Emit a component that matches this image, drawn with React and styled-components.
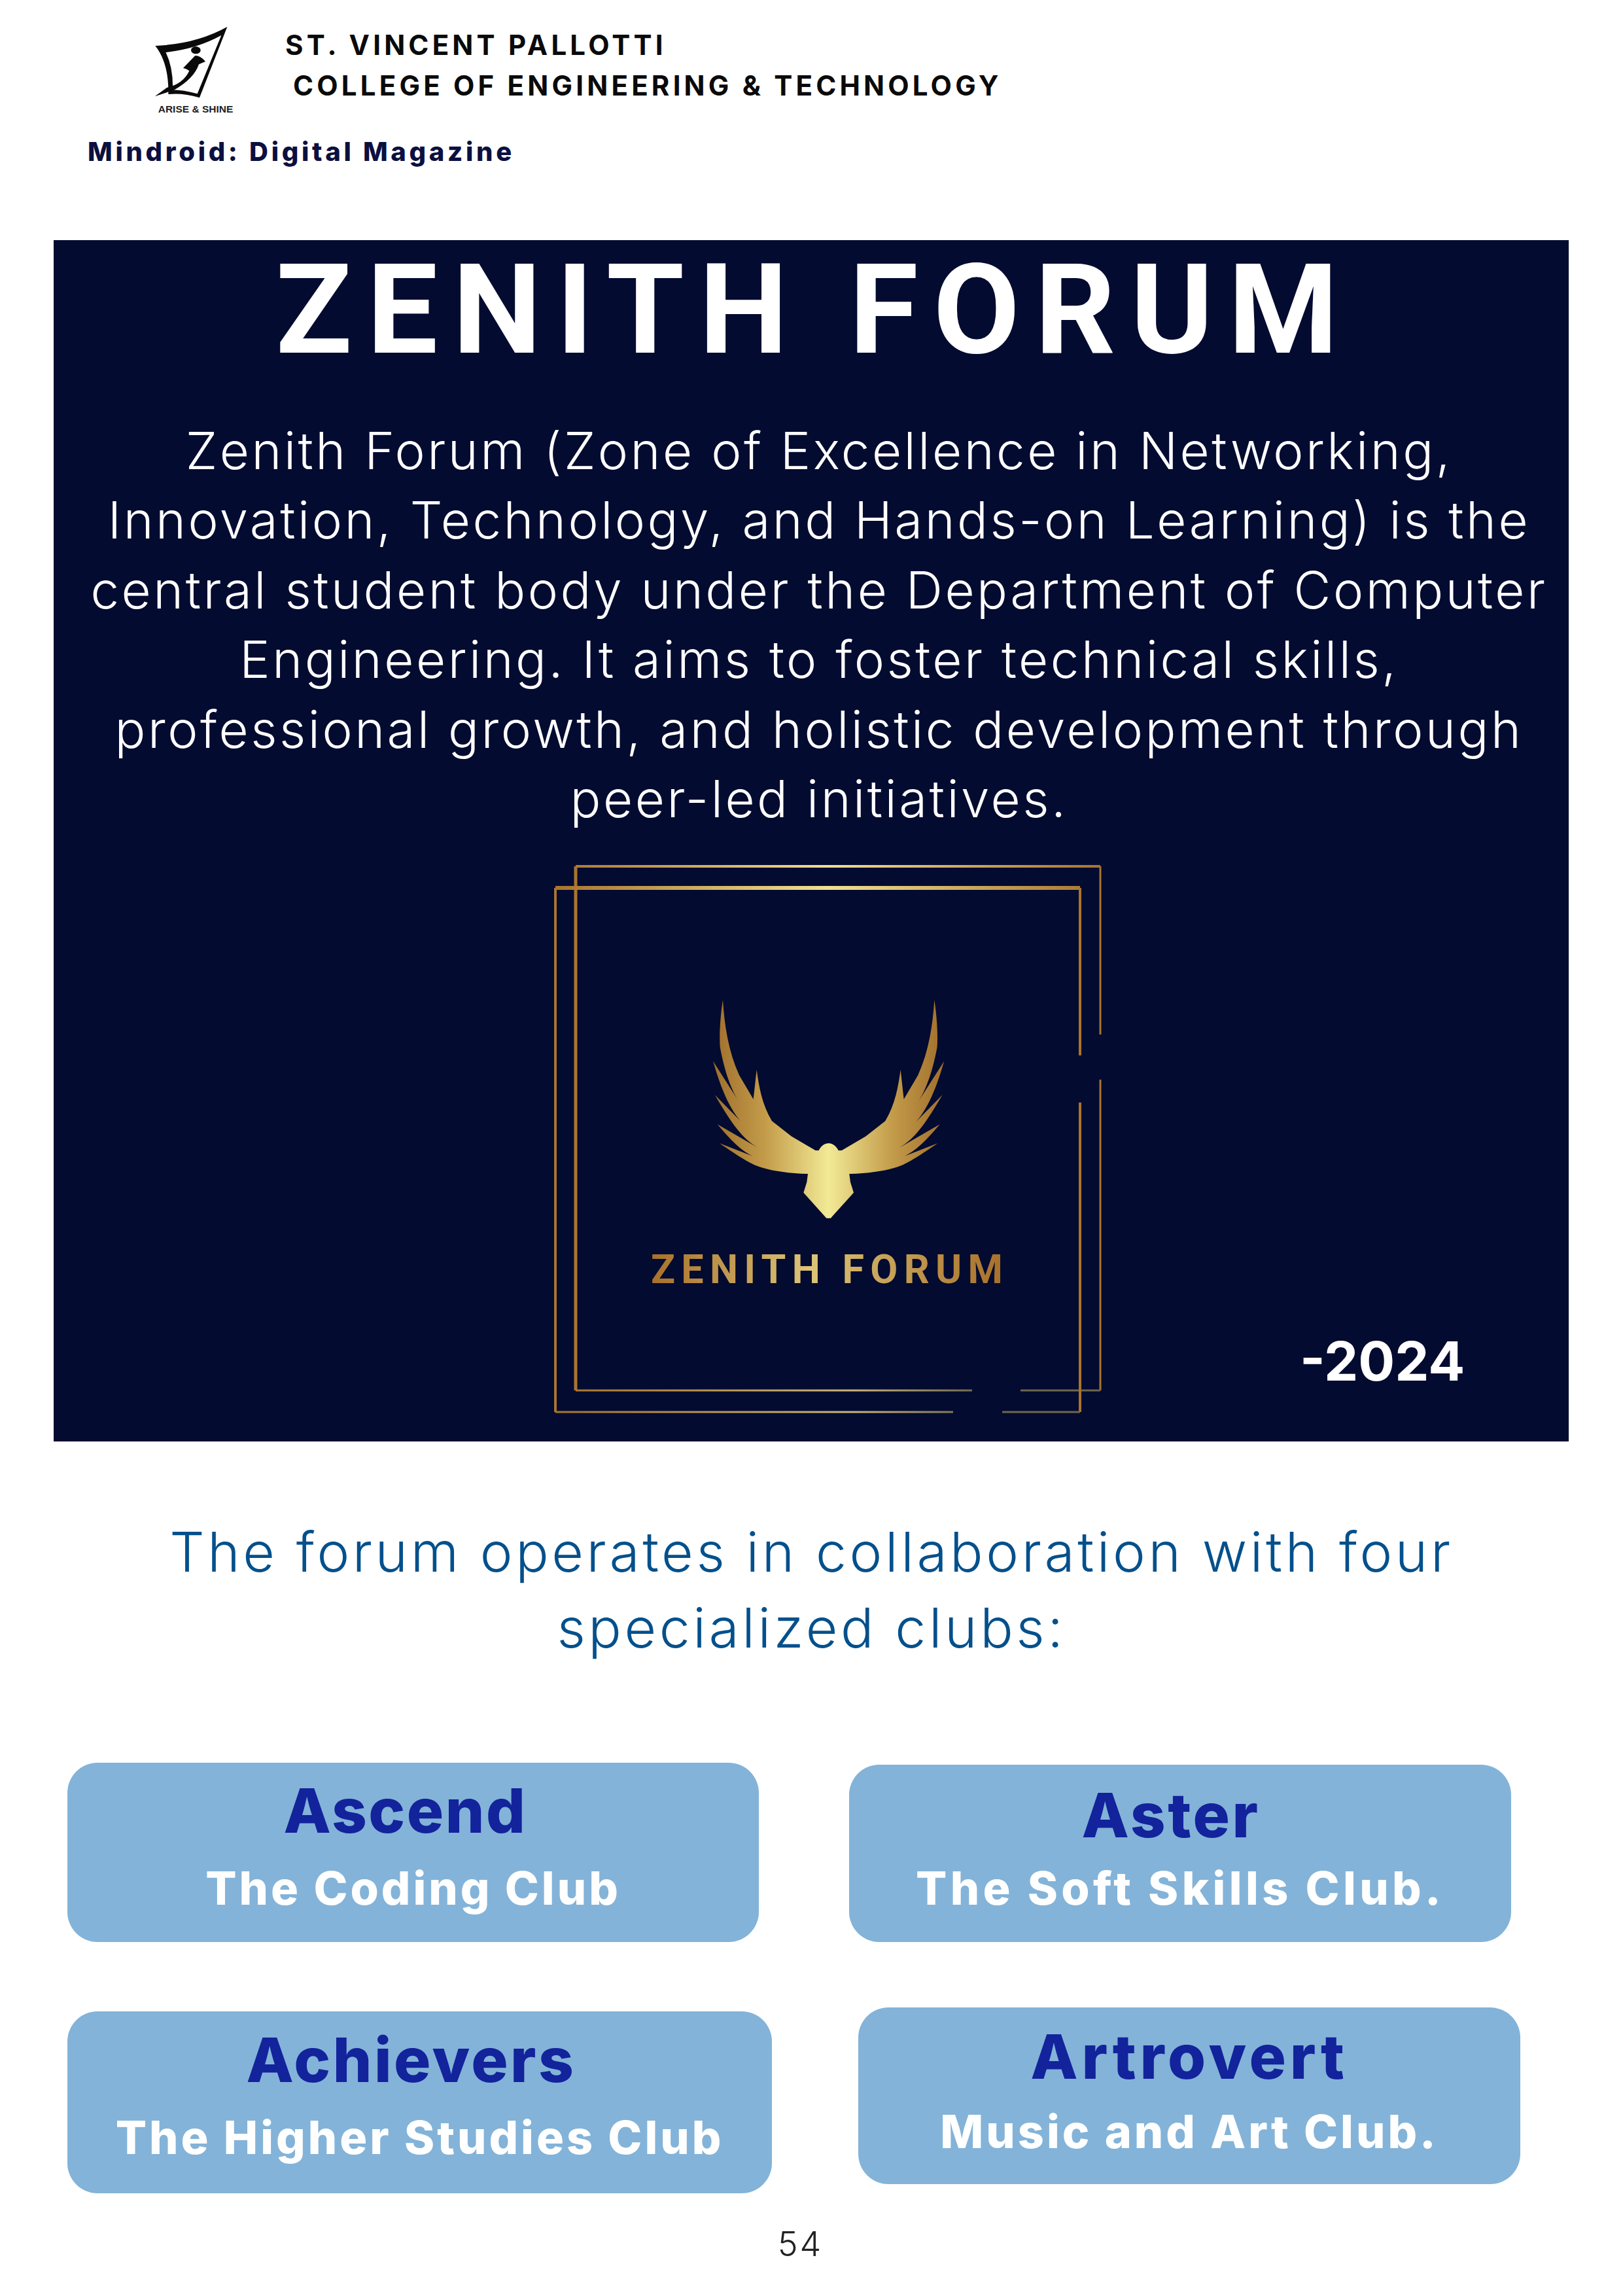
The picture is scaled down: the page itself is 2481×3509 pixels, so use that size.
import React from "react";
import styled, { createGlobalStyle } from "styled-components";

const GlobalStyle = createGlobalStyle`
  html, body {
    margin: 0;
    padding: 0;
    background: #ffffff;
  }
`;

const Page = styled.div`
  width: 2481px;
  height: 3509px;
  overflow: hidden;
  display: flex;
  flex-direction: column;
  background: #ffffff;
  font-family: "Inter", "Liberation Sans", sans-serif;

  & > * {
    flex-shrink: 0;
  }
`;

const Header = styled.header`
  height: 367px;
  box-sizing: border-box;
  padding: 40px 0 0 134px;
`;

const HeaderRow = styled.div`
  display: flex;
  align-items: flex-start;
`;

const LogoBlock = styled.div`
  width: 200px;
  margin-left: 66px;
  display: flex;
  flex-direction: column;
  align-items: center;
`;

const LogoCaption = styled.span`
  font-family: "Liberation Sans", sans-serif;
  font-weight: 700;
  font-size: 15.5px;
  line-height: 18px;
  color: #222222;
  margin-left: -2px;
`;

const College = styled.div`
  margin-left: 36px;
  margin-top: -2px;
  color: #0a0a0a;
  font-weight: 700;
  font-size: 42px;
  line-height: 62px;
`;

const CollegeLine = styled.div`
  white-space: nowrap;
  padding-left: ${(props) => props.$indent || 0}px;
  letter-spacing: 5.2px;
`;

const Magazine = styled.div`
  margin-top: 31px;
  color: #0b1040;
  font-weight: 800;
  font-size: 40px;
  line-height: 50px;
  letter-spacing: 4.7px;
`;

const Panel = styled.section`
  position: relative;
  margin-left: 82px;
  width: 2316px;
  height: 1836px;
  box-sizing: border-box;
  background: #040b30;
  color: #ffffff;
  display: flex;
  flex-direction: column;
  align-items: center;
`;

const Title = styled.h1`
  margin: 0;
  padding: 4px 0 0 10px;
  font-family: "Roboto", sans-serif;
  font-weight: 700;
  font-size: 192px;
  line-height: 206px;
  letter-spacing: 23px;
  white-space: nowrap;
`;

const Intro = styled.p`
  margin: 0;
  padding-top: 59px;
  padding-left: 24px;
  font-weight: 300;
  font-size: 78px;
  line-height: 106.4px;
  letter-spacing: 3.5px;
  text-align: center;
  white-space: nowrap;
`;

const LogoSlot = styled.div`
  position: absolute;
  left: 738px;
  top: 933px;
  width: 900px;
  height: 900px;
`;

const Year = styled.div`
  position: absolute;
  left: 1905px;
  top: 1658px;
  font-weight: 700;
  font-size: 83px;
  line-height: 110px;
`;

const Note = styled.p`
  margin: 111px 0 148px;
  color: #03508c;
  font-weight: 300;
  font-size: 84px;
  line-height: 116px;
  letter-spacing: 4.6px;
  text-align: center;
  white-space: nowrap;
`;

const ClubRow = styled.div`
  display: flex;
  align-items: flex-start;
  padding-left: 103px;
  margin-top: ${(props) => props.$top}px;
`;

const ClubCard = styled.div`
  width: ${(props) => props.$width}px;
  height: ${(props) => props.$height}px;
  margin-left: ${(props) => props.$left || 0}px;
  margin-top: ${(props) => props.$down || 0}px;
  box-sizing: border-box;
  padding-top: ${(props) => props.$pad}px;
  background: #83b3d8;
  border-radius: 46px;
  display: flex;
  flex-direction: column;
  align-items: center;
`;

const ClubName = styled.div`
  color: #12239c;
  font-weight: 800;
  font-size: 94px;
  line-height: 100px;
  letter-spacing: ${(props) => props.$track || 3.5}px;
  margin-left: ${(props) => props.$shift || 0}px;
`;

const ClubRole = styled.div`
  color: #ffffff;
  font-weight: 800;
  font-size: 70px;
  line-height: 80px;
  letter-spacing: ${(props) => props.$track || 4}px;
  margin-top: ${(props) => props.$gap}px;
  white-space: nowrap;
`;

const PageNumber = styled.div`
  margin-top: 48px;
  padding-right: 34px;
  text-align: center;
  color: #222222;
  font-weight: 300;
  font-size: 52px;
  line-height: 60px;
  letter-spacing: 3px;
`;

const clubRows = [
  {
    top: 0,
    clubs: [
      { name: "Ascend", role: "The Coding Club", width: 1057, height: 274, pad: 23, gap: 29, shift: -24, nameTrack: 2.5 },
      { name: "Aster", role: "The Soft Skills Club.", width: 1012, height: 271, left: 138, down: 3, pad: 27, gap: 22, shift: -28, roleTrack: 5.4 },
    ],
  },
  {
    top: 100,
    clubs: [
      { name: "Achievers", role: "The Higher Studies Club", width: 1077, height: 278, down: 6, pad: 24, gap: 29, shift: -26 },
      { name: "Artrovert", role: "Music and Art Club.", width: 1012, height: 270, left: 132, pad: 25, gap: 25, shift: 0, nameTrack: 5.8 },
    ],
  },
];

const FEATHERS =
  "M165 85 C172 200 190 320 240 430 L305 540 L320 405 C330 480 345 565 390 640 L480 710 L590 775 L605 775 C615 755 630 742 651 742 L651 1085 " +
  "L640 1085 L535 968 L550 920 L555 882 C470 880 400 870 350 855 C310 845 270 825 150 742 L300 800 C260 780 220 750 140 655 L325 762 " +
  "C270 730 220 680 128 520 L275 670 C220 620 170 540 120 365 L235 545 C200 490 170 400 152 300 C148 230 155 150 165 85 Z";

function CollegeMark() {
  return (
    <svg width="200" height="118" viewBox="0 30 600 354" aria-hidden="true">
      <path
        fillRule="evenodd"
        fill="#0a0a0a"
        d="M112 120 Q300 112 442 33 L315 358 Q240 335 172 342 Q175 200 112 120 Z M160 150 Q300 135 415 72 L305 340 Q240 322 192 322 Q195 220 160 150 Z"
      />
      <ellipse cx="298" cy="140" rx="22" ry="17" fill="#0a0a0a" />
      <path
        fill="#0a0a0a"
        d="M240 222 L295 165 Q320 165 342 192 L312 205 Q290 270 200 322 L110 352 L165 312 Q240 295 268 235 Q255 225 240 222 Z"
      />
    </svg>
  );
}

function ForumLogo() {
  return (
    <svg width="900" height="900" viewBox="820 1300 900 900" aria-label="Zenith Forum logo">
      <defs>
        <linearGradient id="frameGold" x1="849" x2="1682" y1="0" y2="0" gradientUnits="userSpaceOnUse">
          <stop offset="0" stopColor="#a8742e" />
          <stop offset="0.5" stopColor="#f0e090" />
          <stop offset="1" stopColor="#a8742e" />
        </linearGradient>
        <linearGradient id="bottomGold" x1="849" x2="1500" y1="0" y2="0" gradientUnits="userSpaceOnUse">
          <stop offset="0" stopColor="#a8742e" />
          <stop offset="0.7" stopColor="#c8b47a" />
          <stop offset="1" stopColor="#6d6650" />
        </linearGradient>
        <linearGradient id="wingGold" x1="120" x2="651" y1="0" y2="0" gradientUnits="userSpaceOnUse">
          <stop offset="0" stopColor="#a06e2c" />
          <stop offset="0.45" stopColor="#c39c4a" />
          <stop offset="1" stopColor="#f2ea96" />
        </linearGradient>
        <linearGradient id="wordGold" x1="995" x2="1533" y1="0" y2="0" gradientUnits="userSpaceOnUse">
          <stop offset="0" stopColor="#a8702a" />
          <stop offset="0.45" stopColor="#dcc478" />
          <stop offset="1" stopColor="#a8702a" />
        </linearGradient>
      </defs>
      <g fill="none">
        <path stroke="url(#frameGold)" strokeWidth="4" d="M880 1324 H1682" />
        <path stroke="#a8742e" strokeWidth="5" d="M880 1324 V2125" />
        <path stroke="#a8742e" strokeWidth="3" d="M1682 1324 V1581 M1682 1650 V2125" />
        <path stroke="url(#bottomGold)" strokeWidth="3" d="M880 2125 H1486 M1560 2125 H1682" />
        <path stroke="url(#frameGold)" strokeWidth="6" d="M849 1357 H1651" />
        <path stroke="#a8742e" strokeWidth="4" d="M849 1357 V2158 M1651 1357 V1613 M1651 1685 V2158" />
        <path stroke="url(#bottomGold)" strokeWidth="3" d="M849 2158 H1457 M1532 2158 H1651" />
      </g>
      <g transform="translate(1050 1500) scale(0.3333)">
        <path d={FEATHERS} fill="url(#wingGold)" />
        <path d={FEATHERS} fill="url(#wingGold)" transform="translate(1300 0) scale(-1 1)" />
      </g>
      <text
        x="995"
        y="1961"
        textLength="538"
        lengthAdjust="spacing"
        fill="url(#wordGold)"
        fontFamily="Roboto, sans-serif"
        fontWeight="700"
        fontSize="61"
      >
        ZENITH FORUM
      </text>
    </svg>
  );
}

export default function App() {
  return (
    <Page>
      <GlobalStyle />
      <Header>
        <HeaderRow>
          <LogoBlock>
            <CollegeMark />
            <LogoCaption>ARISE &amp; SHINE</LogoCaption>
          </LogoBlock>
          <College>
            <CollegeLine>ST. VINCENT PALLOTTI</CollegeLine>
            <CollegeLine $indent={12}>COLLEGE OF ENGINEERING &amp; TECHNOLOGY</CollegeLine>
          </College>
        </HeaderRow>
        <Magazine>Mindroid: Digital Magazine</Magazine>
      </Header>

      <Panel>
        <Title>ZENITH FORUM</Title>
        <Intro>
          Zenith Forum (Zone of Excellence in Networking,
          <br />
          Innovation, Technology, and Hands-on Learning) is the
          <br />
          central student body under the Department of Computer
          <br />
          Engineering. It aims to foster technical skills,
          <br />
          professional growth, and holistic development through
          <br />
          peer-led initiatives.
        </Intro>
        <LogoSlot>
          <ForumLogo />
        </LogoSlot>
        <Year>-2024</Year>
      </Panel>

      <Note>
        The forum operates in collaboration with four
        <br />
        specialized clubs:
      </Note>

      {clubRows.map((row) => (
        <ClubRow key={row.clubs[0].name} $top={row.top}>
          {row.clubs.map((club) => (
            <ClubCard key={club.name} $width={club.width} $height={club.height} $left={club.left} $down={club.down} $pad={club.pad}>
              <ClubName $shift={club.shift} $track={club.nameTrack}>{club.name}</ClubName>
              <ClubRole $gap={club.gap} $track={club.roleTrack}>{club.role}</ClubRole>
            </ClubCard>
          ))}
        </ClubRow>
      ))}

      <PageNumber>54</PageNumber>
    </Page>
  );
}
